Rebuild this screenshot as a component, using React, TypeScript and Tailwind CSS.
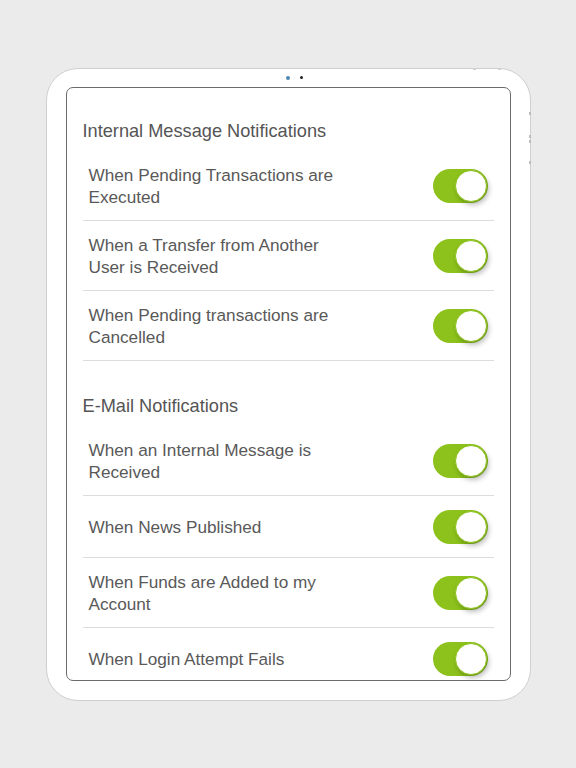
import React from "react";

const Toggle = () => (
  <div className="relative flex h-[34px] w-[55px] shrink-0 items-center justify-end rounded-full bg-[#8cc21b] pr-[1px]">
    <div className="h-[32px] w-[32px] rounded-full border border-[#8cc21b] bg-white shadow-[2px_3px_5px_rgba(0,0,0,0.25)]" />
  </div>
);

const Row = ({ label, last }: { label: React.ReactNode; last?: boolean }) => (
  <div
    className={`flex items-center justify-between pt-[13px] pb-[12px] pl-[6px] pr-[6px] ${
      last ? "" : "border-b border-b-[#dcdcdc]"
    }`}
  >
    <p className="w-[272px] text-[17.2px] leading-[22px] text-[#595959]">{label}</p>
    <div className="py-[1px]">
      <Toggle />
    </div>
  </div>
);

const SectionTitle = ({ children, top }: { children: React.ReactNode; top: string }) => (
  <h2 className={`${top} mb-[9px] text-[18.2px] leading-[22px] text-[#555555]`}>{children}</h2>
);

export default function App() {
  return (
    <main
      className="flex h-[768px] w-full items-center justify-center bg-[#ebebeb]"
      style={{ fontFamily: '"Liberation Sans", Arial, sans-serif' }}
    >
      <section className="relative flex h-[633px] w-[485px] flex-col rounded-[32px] border border-[#cfcfcf] bg-white px-[19px] pb-[19px]">
        {/* top camera */}
        <div className="flex h-[18px] shrink-0 items-center justify-center gap-[10px] pl-[12px]">
          <span className="h-[4px] w-[4px] rounded-full bg-[#4f86b0]" />
          <span className="h-[3px] w-[3px] rounded-full bg-[#222]" />
        </div>
        {/* side marks */}
        <span className="absolute right-[-1px] top-[43px] h-[3px] w-[2px] bg-[#bdbdbd]" />
        <span className="absolute right-[-1px] top-[66px] h-[3px] w-[2px] bg-[#bdbdbd]" />
        <span className="absolute right-[-1px] top-[71px] h-[3px] w-[2px] bg-[#bdbdbd]" />
        <span className="absolute right-[-1px] top-[92px] h-[3px] w-[2px] bg-[#bdbdbd]" />
        <span className="absolute right-[54px] top-[-1px] h-[2px] w-[3px] bg-[#d0d0d0]" />
        <span className="absolute right-[29px] top-[-1px] h-[2px] w-[3px] bg-[#d0d0d0]" />

        <div className="flex-1 overflow-hidden rounded-[7px] border border-[#6b6b6b] px-[16px]">
          <SectionTitle top="mt-[32px]">Internal Message Notifications</SectionTitle>
          <Row label="When Pending Transactions are Executed" />
          <Row label={<>When a Transfer from Another<br />User is Received</>} />
          <Row label="When Pending transactions are Cancelled" />

          <SectionTitle top="mt-[34px]">E-Mail Notifications</SectionTitle>
          <Row label="When an Internal Message is Received" />
          <Row label="When News Published" />
          <Row label="When Funds are Added to my Account" />
          <Row label="When Login Attempt Fails" last />
        </div>
      </section>
    </main>
  );
}
